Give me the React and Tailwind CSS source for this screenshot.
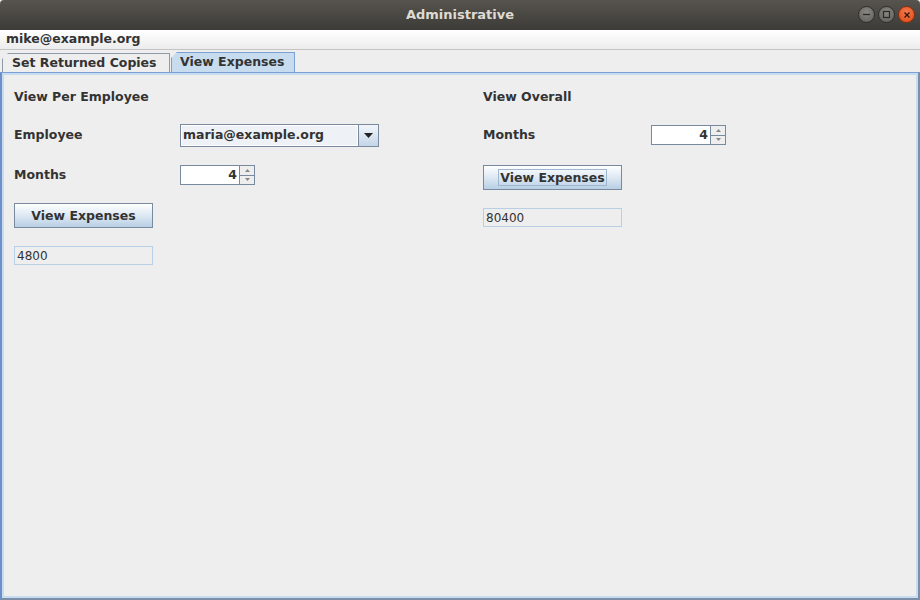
import React from 'react';

const font = { fontFamily: '"DejaVu Sans", "Liberation Sans", sans-serif' };

function WinButton({ kind }) {
  if (kind === 'close') {
    return (
      <div className="w-[17px] h-[17px] rounded-full bg-[radial-gradient(circle_at_50%_35%,#f47a4f,#dd4814)] border border-[#8c2d0c] flex items-center justify-center">
        <svg width="8" height="8" viewBox="0 0 8 8">
          <path d="M1.5 1.5 L6.5 6.5 M6.5 1.5 L1.5 6.5" stroke="#3a1407" strokeWidth="1.4" />
        </svg>
      </div>
    );
  }
  return (
    <div className="w-[17px] h-[17px] rounded-full bg-[radial-gradient(circle_at_50%_35%,#8a8883,#5e5c58)] border border-[#2e2d2a] flex items-center justify-center">
      <svg width="9" height="9" viewBox="0 0 9 9">
        {kind === 'min' ? (
          <path d="M1 4.5 H8" stroke="#2a2926" strokeWidth="1.3" />
        ) : (
          <rect x="1.5" y="1.5" width="6" height="6" fill="none" stroke="#2a2926" strokeWidth="1.2" />
        )}
      </svg>
    </div>
  );
}

function Spinner() {
  return (
    <div className="flex h-[20px]">
      <div className="w-[59px] h-full bg-white border border-[#7a8a9e] border-r-0 flex items-center justify-end pr-[2px] text-[12.5px] font-bold text-[#333333]">
        4
      </div>
      <div className="w-[16px] h-full flex flex-col border border-[#7a8a9e]">
        <div className="flex-1 bg-[#eeeeee] border-b border-[#7a8a9e] flex items-center justify-center">
          <svg width="5" height="3" viewBox="0 0 5 3"><path d="M0 3 L2.5 0 L5 3Z" fill="#888" /></svg>
        </div>
        <div className="flex-1 bg-[#eeeeee] flex items-center justify-center">
          <svg width="5" height="3" viewBox="0 0 5 3"><path d="M0 0 L5 0 L2.5 3Z" fill="#888" /></svg>
        </div>
      </div>
    </div>
  );
}

function Button({ focused }) {
  return (
    <div className="w-[139px] h-[25px] border border-[#7a8a9e] bg-[linear-gradient(#ffffff,#dde8f3_50%,#b8cfe5)] flex items-center justify-center">
      <span className={`text-[12.5px] font-bold text-[#333333] px-[1px] leading-[15px] ${focused ? 'border border-[#9fb6cf]' : 'border border-transparent'}`}>
        View Expenses
      </span>
    </div>
  );
}

function Field({ value }) {
  return (
    <div className="w-[139px] h-[19px] border border-[#b8cfe5] bg-[#eeeeee] flex items-center pl-[2px] text-[12px] text-[#333333]">
      {value}
    </div>
  );
}

export default function App() {
  return (
    <div className="w-[920px] h-[600px] flex flex-col bg-[#eeeeee] overflow-hidden" style={font}>
      <div className="h-[30px] shrink-0 bg-[linear-gradient(#57544f,#3c3b37)] relative flex items-center justify-center rounded-t-[4px]">
        <span className="text-[13px] font-bold text-[#dfdbd2]">Administrative</span>
        <div className="absolute right-[5px] top-[6px] flex gap-[3px]">
          <WinButton kind="min" />
          <WinButton kind="max" />
          <WinButton kind="close" />
        </div>
      </div>

      <div className="h-[20px] shrink-0 bg-[linear-gradient(#ffffff,#ececec)] border-b border-[#c4c4c4] flex items-center pl-[6px]">
        <span className="text-[12.5px] font-bold text-[#333333]">mike@example.org</span>
      </div>

      <div className="h-[21px] shrink-0 flex items-end pl-[2px] mt-[1px]">
        <div className="h-[19px] w-[168px] border border-b-0 border-[#8e9aa8] bg-[#eeeeee] flex items-center pl-[9px] text-[12.5px] font-bold text-[#333333] [clip-path:polygon(6px_0,100%_0,100%_100%,0_100%,0_6px)] rounded-tl-[2px]">
          Set Returned Copies
        </div>
        <div className="h-[20px] w-[124px] ml-[1px] border border-b-0 border-[#7b9fd6] bg-[#c8dcf0] flex items-center pl-[8px] text-[12.5px] font-bold text-[#333333] [clip-path:polygon(6px_0,100%_0,100%_100%,0_100%,0_6px)]">
          View Expenses
        </div>
      </div>

      <div className="flex-1 border-t border-[#7b9fd6] border-l-2 border-l-[#6d8fc9] border-r-2 border-r-[#7a8ea8] border-b-2 border-b-[#7a8ea8]">
        <div className="h-full border-t-2 border-[#c8dcf0] border-x-2 border-b-2 flex pl-[10px]">
          <div className="w-[469px] flex flex-col">
            <div className="h-[20px] mt-[12px] flex items-center text-[12.5px] font-bold text-[#333333]">View Per Employee</div>
            <div className="h-[22px] mt-[17px] flex items-center">
              <span className="w-[166px] text-[12.5px] font-bold text-[#333333] pt-[1px]">Employee</span>
              <div className="w-[199px] h-[23px] flex border border-[#7a8a9e] bg-[#eef1f5]">
                <div className="flex-1 flex items-center pl-[2px] text-[12.5px] font-bold text-[#333333] border-r border-[#7a8a9e] shadow-[inset_0_0_0_1px_#ffffff]">
                  maria@example.org
                </div>
                <div className="w-[19px] bg-[linear-gradient(#f2f6fa,#c3d5e8)] flex items-center justify-center">
                  <svg width="9" height="5" viewBox="0 0 9 5"><path d="M0 0 H9 L4.5 5Z" fill="#222" /></svg>
                </div>
              </div>
            </div>
            <div className="h-[20px] mt-[19px] flex items-center">
              <span className="w-[166px] text-[12.5px] font-bold text-[#333333]">Months</span>
              <Spinner />
            </div>
            <div className="mt-[18px]">
              <Button />
            </div>
            <div className="mt-[18px]">
              <Field value="4800" />
            </div>
          </div>

          <div className="flex-1 flex flex-col">
            <div className="h-[20px] mt-[12px] flex items-center text-[12.5px] font-bold text-[#333333]">View Overall</div>
            <div className="h-[22px] mt-[17px] flex items-center">
              <span className="w-[168px] text-[12.5px] font-bold text-[#333333] pt-[1px]">Months</span>
              <Spinner />
            </div>
            <div className="mt-[19px]">
              <Button focused />
            </div>
            <div className="mt-[18px]">
              <Field value="80400" />
            </div>
          </div>
        </div>
      </div>
    </div>
  );
}
